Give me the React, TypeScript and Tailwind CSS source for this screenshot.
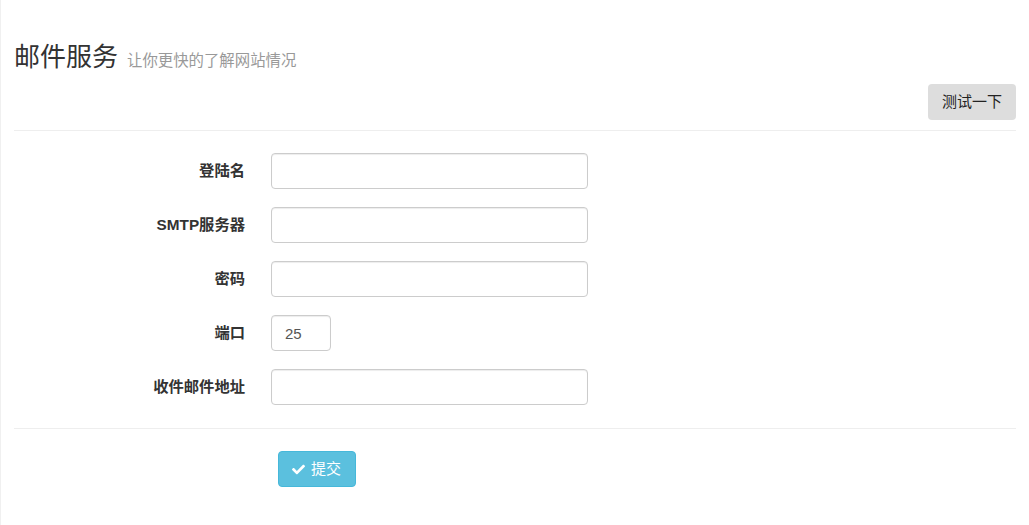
import { FaCheck } from 'react-icons/fa';

const fields = [
  { label: '登陆名', value: '', width: 'w-[317px]' },
  { label: 'SMTP服务器', value: '', width: 'w-[317px]' },
  { label: '密码', value: '', width: 'w-[317px]' },
  { label: '端口', value: '25', width: 'w-[60px]' },
  { label: '收件邮件地址', value: '', width: 'w-[317px]' },
];

const App = () => {
  return (
    <div className="min-h-[525px] bg-white border-l border-[#f0f0f0] px-[13px] font-['Liberation_Sans','Noto_Sans_CJK_SC',sans-serif] text-[15px] text-[#333]">
      <h1 className="pt-[42px] h-[72px] text-[26px] leading-[30px] font-normal text-[#333]">
        邮件服务
        <span className="ml-[9px] text-[15.4px] leading-none text-[#999]">让你更快的了解网站情况</span>
      </h1>

      <div className="flex justify-end mt-[12px]">
        <button className="h-[36px] px-[14px] rounded-[4px] bg-[#dddddd] text-[15px] text-[#222]">
          测试一下
        </button>
      </div>

      <hr className="mt-[10px] border-0 border-t border-[#eeeeee]" />

      <form className="pt-[22px] flex flex-col gap-[18px]">
        {fields.map((f) => (
          <div key={f.label} className="flex items-center gap-[26px]">
            <label className="w-[231px] text-right font-bold text-[15.3px] text-[#333]">
              {f.label}
            </label>
            <input
              defaultValue={f.value}
              className={`${f.width} h-[36px] px-[13px] rounded-[4px] border border-[#cccccc] bg-white text-[15px] text-[#555] shadow-[inset_0_1px_1px_rgba(0,0,0,0.075)] outline-none`}
            />
          </div>
        ))}
      </form>

      <hr className="mt-[23px] border-0 border-t border-[#eeeeee]" />

      <div className="pt-[22px] pl-[264px]">
        <button className="h-[36px] pl-[13px] pr-[14px] flex items-center gap-[6px] whitespace-nowrap rounded-[4px] bg-[#5bc0de] border border-[#46b8da] text-white text-[15px]">
          <FaCheck className="w-[13px] h-[13px]" />
          提交
        </button>
      </div>
    </div>
  );
};

export default App;
